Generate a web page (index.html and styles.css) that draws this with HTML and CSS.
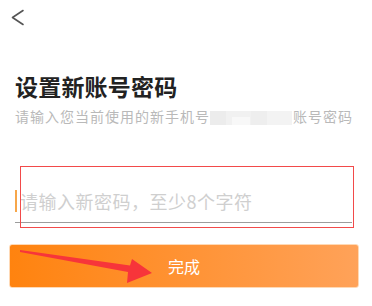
FILE: index.html
```html
<!DOCTYPE html>
<html lang="zh-CN">
<head>
<meta charset="utf-8">
<title>设置新账号密码</title>
<link rel="stylesheet" href="styles.css">
</head>
<body>
<div class="page">
  <header class="nav">
    <svg class="back" width="14" height="18" viewBox="0 0 14 18" aria-hidden="true">
      <polyline points="12,1.5 1.5,8.5 12,15.5" fill="none" stroke="#555" stroke-width="1.6" stroke-linecap="round" stroke-linejoin="round"/>
    </svg>
  </header>
  <main class="content">
    <h1 class="title">设置新账号密码</h1>
    <p class="sub">请输入您当前使用的新手机号<span class="masked"></span>账号密码</p>
    <div class="field">
      <span class="caret"></span>
      <span class="placeholder">请输入新密码，至少8个字符</span>
    </div>
    <button class="submit" type="button">完成</button>
  </main>
  <div class="mark-box"></div>
  <svg class="mark-arrow" width="372" height="306" viewBox="0 0 372 306" aria-hidden="true">
    <polygon points="20,250 130,265.5 132,259 152,273 127,283 128,272 20,252" fill="#f7353a"/>
  </svg>
</div>
</body>
</html>
```

FILE: styles.css
```css
html, body {
  margin: 0;
  padding: 0;
  background: #fff;
}
body {
  font-family: "Noto Sans CJK SC", "Noto Sans", sans-serif;
  width: 372px;
  height: 306px;
  overflow: hidden;
}
.page {
  position: relative;
  width: 372px;
  height: 306px;
}
.nav {
  height: 36px;
  display: flex;
  align-items: center;
  padding-left: 11px;
}
.back {
  display: block;
  margin-top: 0;
}
.content {
  padding: 0 13px 0 9px;
}
.title {
  margin: 35px 0 0 6px;
  font-size: 23px;
  line-height: 30px;
  font-weight: 700;
  color: #222;
  letter-spacing: 0.2px;
}
.sub {
  margin: 5px 0 0 6px;
  font-size: 14px;
  line-height: 20px;
  color: #b9b9b9;
  letter-spacing: 1px;
  white-space: nowrap;
}
.masked {
  display: inline-block;
  vertical-align: -3px;
  width: 82px;
  height: 14px;
  margin-right: 1px;
  background:
    linear-gradient(to bottom, transparent 0 45%, #f8f8f8 45% 100%) 22px 0 / 18px 100% no-repeat,
    linear-gradient(to right, #ececec 0 20%, #f1f1f1 20% 50%, #eeeeee 50% 70%, #f3f3f3 70% 100%);
}
.field {
  margin: 62px 7px 0 6px;
  display: flex;
  align-items: center;
  height: 26px;
  padding-bottom: 8px;
  border-bottom: 1px solid #9c9c9c;
}
.caret {
  width: 2px;
  height: 22px;
  background: #f7a64a;
  margin-right: 3px;
}
.placeholder {
  font-size: 18px;
  line-height: 26px;
  color: #cfcfcf;
  letter-spacing: 0.5px;
}
.submit {
  display: flex;
  align-items: center;
  justify-content: center;
  margin-top: 21px;
  width: 350px;
  height: 44px;
  border: 1px solid #ffd9b5;
  border-radius: 3px;
  background: linear-gradient(to right, #ff830f, #ffa259);
  color: #fff;
  font-family: inherit;
  font-size: 16px;
  padding: 0;
}
.mark-box {
  position: absolute;
  left: 20px;
  top: 166px;
  width: 332px;
  height: 60px;
  border: 1.5px solid #f24a4a;
}
.mark-arrow {
  position: absolute;
  left: 0;
  top: 0;
  pointer-events: none;
}
```
